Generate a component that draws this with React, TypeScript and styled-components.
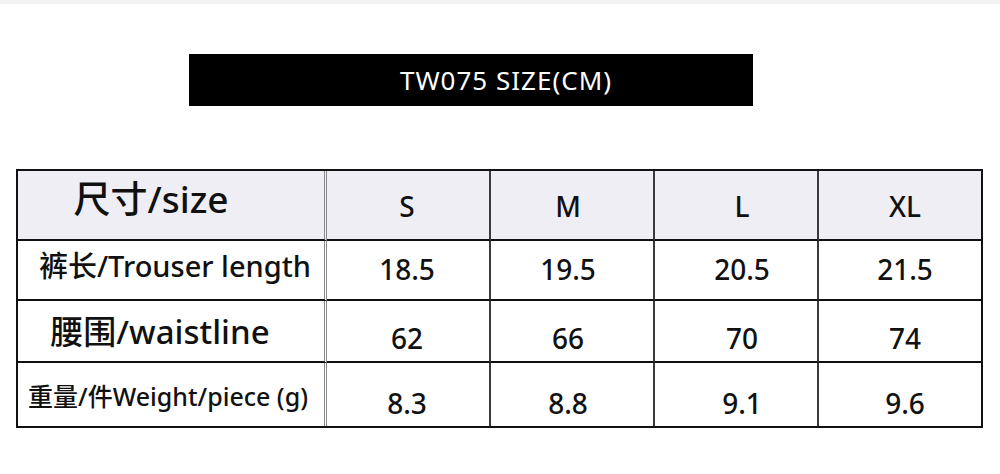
import { Fragment } from 'react';
import styled, { createGlobalStyle } from 'styled-components';

const GlobalStyle = createGlobalStyle`
  html, body {
    margin: 0;
    padding: 0;
    background: #fff;
  }
  body {
    font-family: 'Noto Sans', 'Noto Sans CJK SC', sans-serif;
    color: #111;
  }
`;

const Page = styled.div`
  width: 1000px;
  height: 474px;
  background: #fff;
  border-top: 4px solid #f3f3f5;
  box-sizing: border-box;
  overflow: hidden;
`;

const Banner = styled.div`
  margin: 50px 0 0 189px;
  width: 564px;
  height: 52px;
  background: #000;
  color: #fff;
  display: flex;
  align-items: center;
  justify-content: center;
  padding-left: 70px;
  box-sizing: border-box;
  font-size: 26px;
  letter-spacing: 1px;
`;

const Table = styled.div`
  margin: 63px 0 0 16px;
  width: 967px;
  display: grid;
  grid-template-columns: 309px 164px 164px 164px 1fr;
  grid-template-rows: 70px 60px 62px 63px;
  border: 2px solid #111;
  box-sizing: border-box;
`;

type CellProps = {
  $head?: boolean;
  $first?: boolean;
  $last?: boolean;
  $bottom?: boolean;
  $dy?: number;
  $dx?: number;
  $size?: number;
};

const Cell = styled.div<CellProps>`
  display: flex;
  align-items: center;
  justify-content: center;
  background: ${(p) => (p.$head ? '#efeef4' : '#fff')};
  border-right: ${(p) => (p.$last ? 'none' : p.$first ? '3px double #8a8a8a' : '2px solid #3a3a3a')};
  border-bottom: ${(p) => (p.$bottom ? 'none' : '2px solid #111')};
  font-size: ${(p) => p.$size ?? 28}px;
  font-weight: 500;
  line-height: 1;
  padding-top: ${(p) => Math.max(0, (p.$dy ?? 0) * 2)}px;
  padding-bottom: ${(p) => Math.max(0, -(p.$dy ?? 0) * 2)}px;
  padding-left: ${(p) => Math.max(0, (p.$dx ?? 0) * 2)}px;
  padding-right: ${(p) => Math.max(0, -(p.$dx ?? 0) * 2)}px;
  white-space: nowrap;
  box-sizing: border-box;
`;

const sizes = ['S', 'M', 'L', 'XL'];
const colDx = [-1, -4, 6, 5];

const rows = [
  { label: '裤长/Trouser length', size: 29, dx: 4, dy: -5, vdy: -1, values: ['18.5', '19.5', '20.5', '21.5'] },
  { label: '腰围/waistline', size: 33, dx: -11, dy: 0, vdy: 7, values: ['62', '66', '70', '74'] },
  { label: '重量/件Weight/piece (g)', size: 25, dx: -3, dy: 2, vdy: 8, values: ['8.3', '8.8', '9.1', '9.6'] },
];

export default function App() {
  return (
    <Page>
      <GlobalStyle />
      <Banner>TW075 SIZE(CM)</Banner>
      <Table>
        <Cell $head $first $size={37} $dx={-20} $dy={-7}>
          尺寸/size
        </Cell>
        {sizes.map((s, i) => (
          <Cell key={s} $head $last={i === 3} $size={28} $dy={1} $dx={colDx[i]}>
            {s}
          </Cell>
        ))}
        {rows.map((r, ri) => (
          <Fragment key={r.label}>
            <Cell $first $bottom={ri === 2} $size={r.size} $dx={r.dx} $dy={r.dy}>
              {r.label}
            </Cell>
            {r.values.map((v, i) => (
              <Cell key={v + i} $last={i === 3} $bottom={ri === 2} $size={28} $dy={r.vdy} $dx={colDx[i]}>
                {v}
              </Cell>
            ))}
          </Fragment>
        ))}
      </Table>
    </Page>
  );
}
